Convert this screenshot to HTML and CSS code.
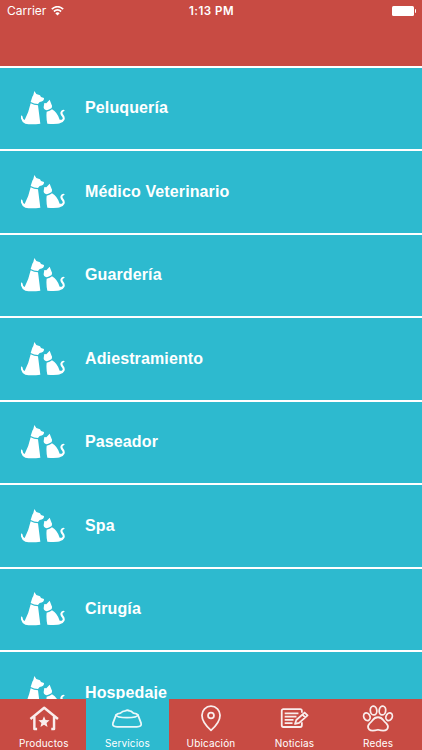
FILE: index.html
```html
<!DOCTYPE html>
<html lang="es">
<head>
    <meta charset="UTF-8">
    <meta name="viewport" content="width=device-width, initial-scale=1.0">
    <title>Servicios</title>
    <link rel="stylesheet" href="styles.css">
</head>
<body>
    <svg class="symbols" aria-hidden="true">
        <symbol id="pets" viewBox="9 10 132 102">
            <path d="M49 10 L55 19 L66 23 L69 28 L78 31 Q79 41 65 43 L60 49 Q48 49 38 43 L43 27 L46 22 Z"/>
            <path d="M38 47 Q48 53 60 53 L67 108 Q40 112 22 108 Q9 103 8 86 Q9 81 13 85 Q14 94 20 97 Q32 75 38 47 Z"/>
            <path d="M95 36 L99 47 Q104 55 101 61 Q96 65 91 66 L86 68 Q76 65 77 58 L79 46 L85 47 Z"/>
            <path d="M86 72 Q96 70 102 65 Q118 74 125 96 Q131 98 134 93 Q135 89 130 84 Q124 76 130 69 Q137 64 140 68 Q140 71 135 72 Q132 75 135 80 Q143 89 139 97 Q135 105 127 106 Q119 110 88 108 Q84 90 86 72 Z"/>
        </symbol>
    </svg>

    <header>
        <div class="carrier">
            <span>Carrier</span>
            <svg class="wifi" viewBox="0 0 13 10">
                <path d="M0.8 3.2 Q6.5 -1.8 12.2 3.2"/>
                <path d="M2.9 5.5 Q6.5 2.3 10.1 5.5"/>
                <path class="dot" d="M4.3 7.3 Q6.5 5.4 8.7 7.3 L6.5 9.6 Z"/>
            </svg>
        </div>
        <span class="time">1:13 PM</span>
        <div class="power">
            <span class="battery"></span>
            <span class="battery-tip"></span>
        </div>
    </header>

    <main>
        <ul class="services">
            <li><svg class="pets"><use href="#pets"/></svg><span>Peluquería</span></li>
            <li><svg class="pets"><use href="#pets"/></svg><span>Médico Veterinario</span></li>
            <li><svg class="pets"><use href="#pets"/></svg><span>Guardería</span></li>
            <li><svg class="pets"><use href="#pets"/></svg><span>Adiestramiento</span></li>
            <li><svg class="pets"><use href="#pets"/></svg><span>Paseador</span></li>
            <li><svg class="pets"><use href="#pets"/></svg><span>Spa</span></li>
            <li><svg class="pets"><use href="#pets"/></svg><span>Cirugía</span></li>
            <li><svg class="pets"><use href="#pets"/></svg><span>Hospedaje</span></li>
        </ul>
    </main>

    <nav>
        <a class="tab">
            <svg viewBox="0 0 32 30">
                <path class="thick" d="M2.2 16.2 L16.2 4.8 L30.2 16.2 M6.2 14 V26.5 H9 M26.2 14 V26.5 H23.4"/>
                <path class="solid" d="M16 13.5 L17.6 17.3 L21.7 17.6 L18.6 20.3 L19.600 24.4 L16 22.2 L12.4 24.4 L13.4 20.3 L10.3 17.6 L14.4 17.3 Z"/>
            </svg>
            <span>Productos</span>
        </a>
        <a class="tab active">
            <svg viewBox="0 0 32 30">
                <path d="M5 11.8 L1.700 20.500 Q0.600 24.200 6 24.200 H26 Q31.400 24.200 30.300 20.500 L27 11.800"/>
                <path d="M5 12 Q5.500 14.900 16 14.900 Q26.500 14.900 27 12 Q26 10.400 22.500 10.200 Q20 7.800 18.500 8 Q16.500 6.800 14.500 7.900 Q11.500 7.800 9.500 10.200 Q6 10.400 5 12 Z"/>
            </svg>
            <span>Servicios</span>
        </a>
        <a class="tab">
            <svg viewBox="0 0 32 30">
                <path d="M16 27.800 Q6.800 19.500 6.800 12.400 A9.200 9.200 0 0 1 25.200 12.400 Q25.200 19.500 16 27.800 Z"/>
                <circle cx="16" cy="12.700" r="3"/>
            </svg>
            <span>Ubicación</span>
        </a>
        <a class="tab">
            <svg viewBox="0 0 32 30">
                <path d="M23 10 V8 Q23 6.300 21.300 6.300 H4.200 Q2.500 6.300 2.500 8 V22.700 Q2.500 24.400 4.200 24.400 H21.300 Q23 24.400 23 22.700 V19.500"/>
                <path d="M5.500 10.500 H19.500 M5.500 13.800 H17.500 M5.500 17.100 H14.500 M5.500 20.400 H13.500"/>
                <path d="M16 21.300 L17.300 17.300 L25.800 9.700 L28.800 12.600 L20.200 20.200 Z M23.500 11.800 L26.500 14.700"/>
            </svg>
            <span>Noticias</span>
        </a>
        <a class="tab">
            <svg viewBox="0 0 32 30">
                <ellipse cx="11.500" cy="7.700" rx="3.300" ry="4.500" transform="rotate(-8 11.500 7.700)"/>
                <ellipse cx="20.500" cy="7.700" rx="3.300" ry="4.500" transform="rotate(8 20.500 7.700)"/>
                <ellipse cx="4.700" cy="14" rx="3.100" ry="4.100" transform="rotate(-25 4.700 14)"/>
                <ellipse cx="27.300" cy="14" rx="3.100" ry="4.100" transform="rotate(25 27.300 14)"/>
                <path d="M16 14.500 Q19.500 14.500 21.500 17.500 Q22.500 19 24.500 20.700 Q27.500 24 25 27 Q22.500 29 16 27.200 Q9.500 29 7 27 Q4.500 24 7.500 20.700 Q9.500 19 10.500 17.500 Q12.500 14.500 16 14.500 Z"/>
            </svg>
            <span>Redes</span>
        </a>
    </nav>
</body>
</html>
```

FILE: styles.css
```css
body {
    margin: 0;
    height: 750px;
    display: flex;
    flex-direction: column;
    overflow: hidden;
    background-color: #2dbacf;
    color: #ffffff;
    font-family: Inter, sans-serif;
}

.symbols {
    display: none;
}

header {
    height: 65.5px;
    flex: none;
    box-sizing: border-box;
    padding: 3px 6px 0 7px;
    display: grid;
    grid-template-columns: 1fr auto 1fr;
    align-items: start;
    background-color: #c84b43;
    font-size: 12px;
    line-height: 16px;
}

.carrier {
    display: flex;
    gap: 5px;
}

.wifi {
    width: 13px;
    height: 10px;
    margin-top: 3px;
    fill: none;
    stroke: #ffffff;
    stroke-width: 1.7;
}

.wifi .dot {
    fill: #ffffff;
    stroke: none;
}

.time {
    font-weight: 600;
    font-size: 11.5px;
    letter-spacing: 0.5px;
}

.power {
    display: flex;
    justify-content: flex-end;
    align-items: center;
    gap: 1px;
    height: 16px;
}

.battery {
    width: 22px;
    height: 10px;
    border-radius: 1.5px;
    background-color: #ffffff;
}

.battery-tip {
    width: 1.5px;
    height: 4px;
    border-radius: 0 2px 2px 0;
    background-color: #ffffff;
}

main {
    flex: 1;
    min-height: 0;
    overflow: hidden;
}

.services {
    list-style: none;
    margin: 0;
    padding: 0;
}

.services li {
    height: 83.5px;
    box-sizing: border-box;
    border-top: 2px solid #ffffff;
    padding-left: 21px;
    display: flex;
    align-items: center;
    gap: 20px;
    font: bold 16px "Liberation Sans", Arial, sans-serif;
    letter-spacing: 0.12px;
}

.pets {
    width: 44px;
    height: 34px;
    fill: #ffffff;
}

nav {
    flex: none;
    height: 51.5px;
    padding: 0 2px;
    display: flex;
    background-color: #c84b43;
}

.tab {
    flex: 1;
    display: flex;
    flex-direction: column;
    align-items: center;
    padding-top: 4px;
    font-size: 10px;
    line-height: 14px;
    letter-spacing: 0.15px;
}

.tab.active {
    background-color: #2dbacf;
}

.tab svg {
    width: 32px;
    height: 30px;
    margin-bottom: 4px;
    fill: none;
    stroke: #ffffff;
    stroke-width: 1.8;
    stroke-linejoin: round;
    opacity: 0.9;
}

.tab .thick {
    stroke-width: 2.5;
}

.tab .solid {
    fill: #ffffff;
    stroke: none;
}
```
